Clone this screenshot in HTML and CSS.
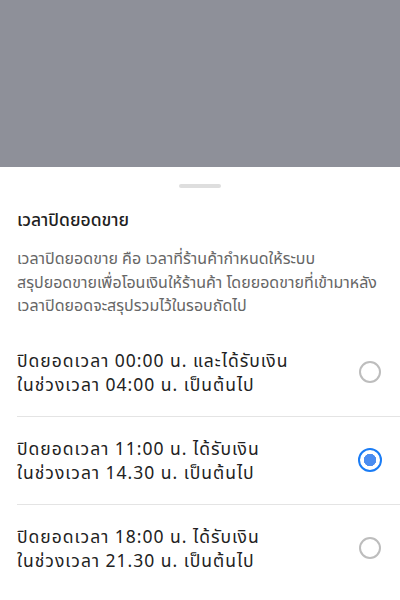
FILE: index.html
```html
<!DOCTYPE html>
<html lang="th">
<head>
    <meta charset="UTF-8">
    <meta name="viewport" content="width=device-width, initial-scale=1.0">
    <title>เวลาปิดยอดขาย</title>
    <link rel="stylesheet" href="styles.css">
</head>
<body>
    <div class="overlay"></div>
    <div class="sheet">
        <div class="handle"></div>
        <h2 class="sheet-title">เวลาปิดยอดขาย</h2>
        <p class="sheet-desc">เวลาปิดยอดขาย คือ เวลาที่ร้านค้ากำหนดให้ระบบ<br>สรุปยอดขายเพื่อโอนเงินให้ร้านค้า โดยยอดขายที่เข้ามาหลัง<br>เวลาปิดยอดจะสรุปรวมไว้ในรอบถัดไป</p>
        <div class="options">
            <label class="option">
                <span class="option-text">ปิดยอดเวลา 00:00 น. และได้รับเงิน<br>ในช่วงเวลา 04:00 น. เป็นต้นไป</span>
                <span class="radio"></span>
            </label>
            <label class="option">
                <span class="option-text">ปิดยอดเวลา 11:00 น. ได้รับเงิน<br>ในช่วงเวลา 14.30 น. เป็นต้นไป</span>
                <span class="radio checked"></span>
            </label>
            <label class="option">
                <span class="option-text">ปิดยอดเวลา 18:00 น. ได้รับเงิน<br>ในช่วงเวลา 21.30 น. เป็นต้นไป</span>
                <span class="radio"></span>
            </label>
        </div>
    </div>
</body>
</html>
```

FILE: styles.css
```css
body {
    font-family: 'Noto Sans Thai', 'Noto Sans', 'DejaVu Sans', sans-serif;
    margin: 0;
    padding: 0;
    background: #ffffff;
    color: #222;
    height: 600px;
    overflow: hidden;
}
.overlay {
    height: 167px;
    background: #8e9099;
}
.sheet {
    background: #ffffff;
    padding: 0 0 0 17px;
}
.handle {
    width: 42px;
    height: 4px;
    border-radius: 2px;
    background: #dedede;
    margin: 17px auto 0 162px;
}
.sheet-title {
    font-size: 17.5px;
    font-weight: 500;
    color: #1f1f1f;
    margin: 18px 0 0;
    line-height: 30px;
}
.sheet-desc {
    font-size: 16px;
    color: #666;
    line-height: 23.5px;
    margin: 12px 0 0;
}
.options {
    margin-top: 10px;
}
.option {
    display: flex;
    align-items: center;
    justify-content: space-between;
    height: 87px;
    padding-right: 19px;
    border-bottom: 1px solid #e4e4e4;
}
.option:last-child {
    border-bottom: none;
}
.option-text {
    font-size: 17.5px;
    line-height: 24.5px;
    letter-spacing: 1px;
    color: #222;
    padding-top: 4px;
}
.radio {
    width: 22px;
    height: 22px;
    border-radius: 50%;
    border: 2px solid #bdbdbd;
    box-sizing: border-box;
}
.radio.checked {
    width: 24px;
    height: 24px;
    border: 2.5px solid #1a7cf5;
    background: radial-gradient(circle, #4a8cf0 0 6px, #ffffff 6.5px);
    margin-right: -1px;
}
```
